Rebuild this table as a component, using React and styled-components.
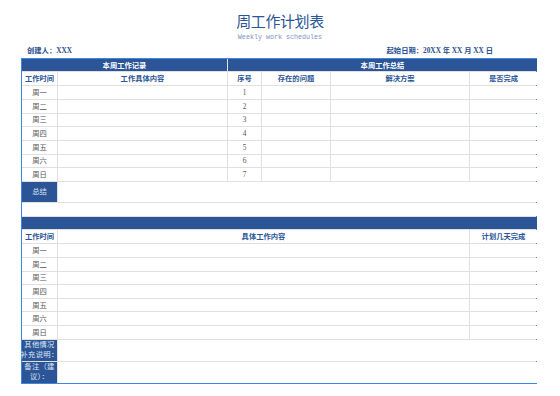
import React from "react";
import styled, { createGlobalStyle } from "styled-components";

const Global = createGlobalStyle`
  html, body { margin: 0; padding: 0; background: #fff; }
  body { font-family: "Liberation Serif", "Noto Sans CJK SC", serif; }
`;

const Page = styled.div`
  width: 560px;
  height: 396px;
  box-sizing: border-box;
  padding-top: 13px;
  display: flex;
  flex-direction: column;
  align-items: center;
`;

const Title = styled.h1`
  margin: 0;
  font-family: "Noto Sans CJK SC", sans-serif;
  font-weight: 400;
  font-size: 15px;
  line-height: 16px;
  color: #2b5597;
  letter-spacing: -0.4px;
`;

const Subtitle = styled.div`
  margin-top: 4px;
  font-family: "Liberation Mono", monospace;
  font-size: 6.7px;
  line-height: 8px;
  color: #7d92bd;
`;

const InfoRow = styled.div`
  align-self: stretch;
  display: flex;
  justify-content: space-between;
  padding: 0 67px 0 27px;
  margin-top: 4px;
  height: 12px;
  font-family: "Liberation Serif", "Noto Sans CJK SC", serif;
  font-size: 7.3px;
  line-height: 12px;
  color: #2b4f8f;
  font-weight: 700;
`;

const Sheet = styled.div`
  align-self: flex-start;
  margin: 1.3px 0 0 21px;
  width: 516px;
  box-sizing: border-box;
  border: 1.5px solid #3b88e0;
  background: #e0e0e0;
  display: grid;
  gap: 1px;
  grid-template-columns: 35px 169px 33px 68px 138px 67px;
  grid-template-rows:
    11.9px 13px repeat(7, 12.7px) 19.7px 13.4px 12.3px 13px repeat(7, 12.6px) 21.5px 20.8px;
  font-size: 7.3px;
  font-family: "Liberation Serif", "Noto Sans CJK SC", serif;
`;

const Cell = styled.div`
  grid-column: span ${(p) => p.$span || 1};
  display: flex;
  align-items: center;
  justify-content: center;
  text-align: center;
  line-height: 9px;
  white-space: nowrap;
  color: ${(p) =>
    p.$kind === "head"
      ? "#2b5597"
      : p.$kind === "bar"
      ? "#ffffff"
      : p.$kind === "label"
      ? "#dfe6f3"
      : "#555"};
  background: ${(p) => (p.$kind === "bar" || p.$kind === "label" ? "#2b5597" : "#fff")};
  font-weight: ${(p) => (p.$kind === "head" || p.$kind === "bar" ? 700 : 400)};
`;

const Stack = styled.span`
  display: flex;
  flex-direction: column;
  align-items: center;
  line-height: 10px;
  font-size: 7.3px;
  letter-spacing: 0.3px;
`;

const days = ["周一", "周二", "周三", "周四", "周五", "周六", "周日"];

export default function App() {
  return (
    <>
      <Global />
      <Page>
        <Title>周工作计划表</Title>
        <Subtitle>Weekly work schedules</Subtitle>
        <InfoRow>
          <span>创建人：XXX</span>
          <span>起始日期：20XX 年 XX 月 XX 日</span>
        </InfoRow>
        <Sheet>
          <Cell $kind="bar" $span={2}>本周工作记录</Cell>
          <Cell $kind="bar" $span={4}>本周工作总结</Cell>

          <Cell $kind="head">工作时间</Cell>
          <Cell $kind="head">工作具体内容</Cell>
          <Cell $kind="head">序号</Cell>
          <Cell $kind="head">存在的问题</Cell>
          <Cell $kind="head">解决方案</Cell>
          <Cell $kind="head">是否完成</Cell>

          {days.map((d, i) => (
            <React.Fragment key={d}>
              <Cell>{d}</Cell>
              <Cell />
              <Cell>{i + 1}</Cell>
              <Cell />
              <Cell />
              <Cell />
            </React.Fragment>
          ))}

          <Cell $kind="label">总结</Cell>
          <Cell $span={5} />

          <Cell $span={6} />

          <Cell $kind="bar" $span={6} />

          <Cell $kind="head">工作时间</Cell>
          <Cell $kind="head" $span={4}>具体工作内容</Cell>
          <Cell $kind="head">计划几天完成</Cell>

          {days.map((d) => (
            <React.Fragment key={"b" + d}>
              <Cell>{d}</Cell>
              <Cell $span={4} />
              <Cell />
            </React.Fragment>
          ))}

          <Cell $kind="label">
            <Stack>
              <span>其他情况</span>
              <span>补充说明：</span>
            </Stack>
          </Cell>
          <Cell $span={5} />

          <Cell $kind="label">
            <Stack>
              <span>备注（建</span>
              <span>议）：</span>
            </Stack>
          </Cell>
          <Cell $span={5} />
        </Sheet>
      </Page>
    </>
  );
}
